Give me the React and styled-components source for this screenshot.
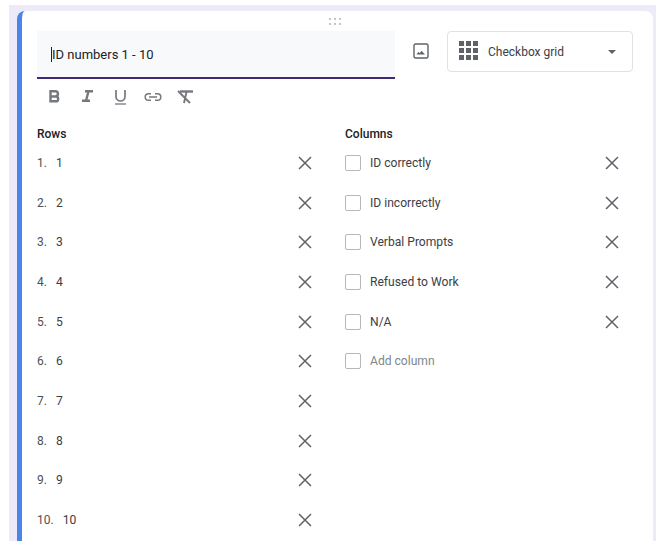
import styled, { createGlobalStyle } from "styled-components";

const ROWS = ["1", "2", "3", "4", "5", "6", "7", "8", "9", "10"];
const COLUMNS = ["ID correctly", "ID incorrectly", "Verbal Prompts", "Refused to Work", "N/A"];

const GlobalStyle = createGlobalStyle`
  html, body {
    margin: 0;
    background: #fff;
  }
  body {
    font-family: Roboto, "Liberation Sans", sans-serif;
    color: #202124;
  }
`;

const CloseIcon = () => (
  <svg width="14" height="14" viewBox="0 0 14 14" fill="none" stroke="#5f6368" strokeWidth="1.5">
    <path d="M1 1l12 12M13 1L1 13" />
  </svg>
);

const App = () => {
  return (
    <>
      <GlobalStyle />
      <Backdrop>
        <Card>
          <DragHandle>
            {Array.from({ length: 6 }).map((_, i) => (
              <i key={i} />
            ))}
          </DragHandle>
          <TopRow>
            <TitleField>
              <Caret />
              ID numbers 1 - 10
            </TitleField>
            <ImageButton>
              <svg width="16" height="16" viewBox="0 0 16 16" fill="none">
                <rect x="1" y="1" width="14" height="14" rx="1.5" stroke="#5f6368" strokeWidth="1.4" />
                <path d="M3.500 11.500l2-2.800 1.300 1.500 1.700-2.400 3.500 3.700z" fill="#5f6368" />
              </svg>
            </ImageButton>
            <TypeSelect>
              <GridIcon>
                {Array.from({ length: 9 }).map((_, i) => (
                  <i key={i} />
                ))}
              </GridIcon>
              <TypeLabel>Checkbox grid</TypeLabel>
              <Arrow />
            </TypeSelect>
          </TopRow>
          <FormatBar>
            <svg width="150" height="20" viewBox="0 0 150 20" fill="none" stroke="#75787c" strokeWidth="2.4">
              <path d="M1.500 3.200h4.800a2.600 2.600 0 0 1 0 5.300H1.500zM1.500 8.500h5.300a2.400 2.400 0 0 1 0 4.800H1.500z" />
              <path d="M36 3.200h8M33 12.800h8M39.500 3.200l-2.500 9.600" />
              <path d="M67 2v6.500a4.500 4.500 0 0 0 9 0V2" strokeWidth="1.7" />
              <path d="M66 16h11" strokeWidth="1.3" />
              <path d="M102 5.700h-2.500a3.300 3.300 0 0 0 0 6.600h2.500M106 5.700h2.500a3.300 3.300 0 0 1 0 6.600H106M100 9h8" strokeWidth="1.5" />
              <path d="M131 3.500h13" strokeWidth="2.4" />
              <path d="M137.500 4l-2.500 11M129 3l12 12" strokeWidth="1.9" />
            </svg>
          </FormatBar>
          <Columns>
            <Section $inset={33}>
              <SectionTitle>Rows</SectionTitle>
              {ROWS.map((row) => (
                <OptionRow key={row}>
                  <RowNumber>{row}.</RowNumber>
                  <OptionText>{row}</OptionText>
                  <RemoveButton>
                    <CloseIcon />
                  </RemoveButton>
                </OptionRow>
              ))}
            </Section>
            <Section $inset={14}>
              <SectionTitle>Columns</SectionTitle>
              {COLUMNS.map((col) => (
                <OptionRow key={col}>
                  <Checkbox />
                  <OptionText>{col}</OptionText>
                  <RemoveButton>
                    <CloseIcon />
                  </RemoveButton>
                </OptionRow>
              ))}
              <OptionRow>
                <Checkbox />
                <OptionText $muted>Add column</OptionText>
              </OptionRow>
            </Section>
          </Columns>
        </Card>
      </Backdrop>
    </>
  );
};

export default App;

const Backdrop = styled.div`
  box-sizing: border-box;
  width: 647px;
  height: 536px;
  margin: 5px 0 0 9px;
  padding: 6px 3px 0 8px;
  background: #ecebf7;
  overflow: hidden;
`;

const Card = styled.div`
  box-sizing: border-box;
  height: 560px;
  padding: 0 20px 0 15px;
  background: #fff;
  border-left: 5px solid #4a86e8;
  border-radius: 8px 8px 0 0;
`;

const DragHandle = styled.div`
  display: grid;
  grid-template-columns: repeat(3, 2px);
  grid-auto-rows: 2px;
  gap: 3px;
  justify-content: center;
  height: 20px;
  padding-top: 7px;
  box-sizing: border-box;
  i {
    background: #c4c6c9;
  }
`;

const TopRow = styled.div`
  display: flex;
  align-items: flex-start;
`;

const TitleField = styled.div`
  box-sizing: border-box;
  display: flex;
  align-items: center;
  width: 358px;
  height: 48px;
  padding: 0 0 0 14px;
  font-size: 13px;
  background: #f8f9fa;
  border-bottom: 2px solid #3f2a78;
`;

const Caret = styled.span`
  width: 1px;
  height: 15px;
  background: #202124;
`;

const ImageButton = styled.div`
  display: flex;
  align-items: center;
  justify-content: center;
  width: 52px;
  height: 39px;
`;

const TypeSelect = styled.div`
  box-sizing: border-box;
  display: flex;
  align-items: center;
  width: 186px;
  height: 41px;
  padding: 0 16px 0 11px;
  border: 1px solid #e0e1e4;
  border-radius: 4px;
`;

const GridIcon = styled.div`
  display: grid;
  grid-template-columns: repeat(3, 5px);
  grid-auto-rows: 5px;
  gap: 2px;
  margin-bottom: 3px;
  i {
    background: #5f6368;
  }
`;

const TypeLabel = styled.span`
  flex: 1;
  margin-left: 10px;
  font-size: 12px;
  color: #3c4043;
`;

const Arrow = styled.span`
  width: 0;
  height: 0;
  border-left: 4px solid transparent;
  border-right: 4px solid transparent;
  border-top: 4px solid #5f6368;
`;

const FormatBar = styled.div`
  display: flex;
  height: 37px;
  padding: 9px 0 0 12px;
  box-sizing: border-box;
`;

const Columns = styled.div`
  display: grid;
  grid-template-columns: 308px 1fr;
  margin-top: 11px;
`;

const Section = styled.div`
  display: flex;
  flex-direction: column;
  padding-right: ${(p) => p.$inset}px;
`;

const SectionTitle = styled.div`
  height: 15px;
  line-height: 15px;
  font-size: 12px;
  font-weight: 500;
  color: #202124;
  margin-bottom: 1px;
`;

const OptionRow = styled.div`
  display: flex;
  align-items: center;
  height: 39.7px;
  font-size: 12.1px;
  color: #3c4043;
`;

const RowNumber = styled.span`
  margin-right: 9px;
  font-size: 12px;
  color: #4d5155;
`;

const OptionText = styled.span`
  flex: 1;
  color: ${(p) => (p.$muted ? "#80868b" : "#3c4043")};
`;

const Checkbox = styled.span`
  box-sizing: border-box;
  width: 16px;
  height: 16px;
  margin-right: 9px;
  border: 1.5px solid #b5b7ba;
  border-radius: 2px;
`;

const RemoveButton = styled.span`
  display: flex;
  width: 14px;
`;
